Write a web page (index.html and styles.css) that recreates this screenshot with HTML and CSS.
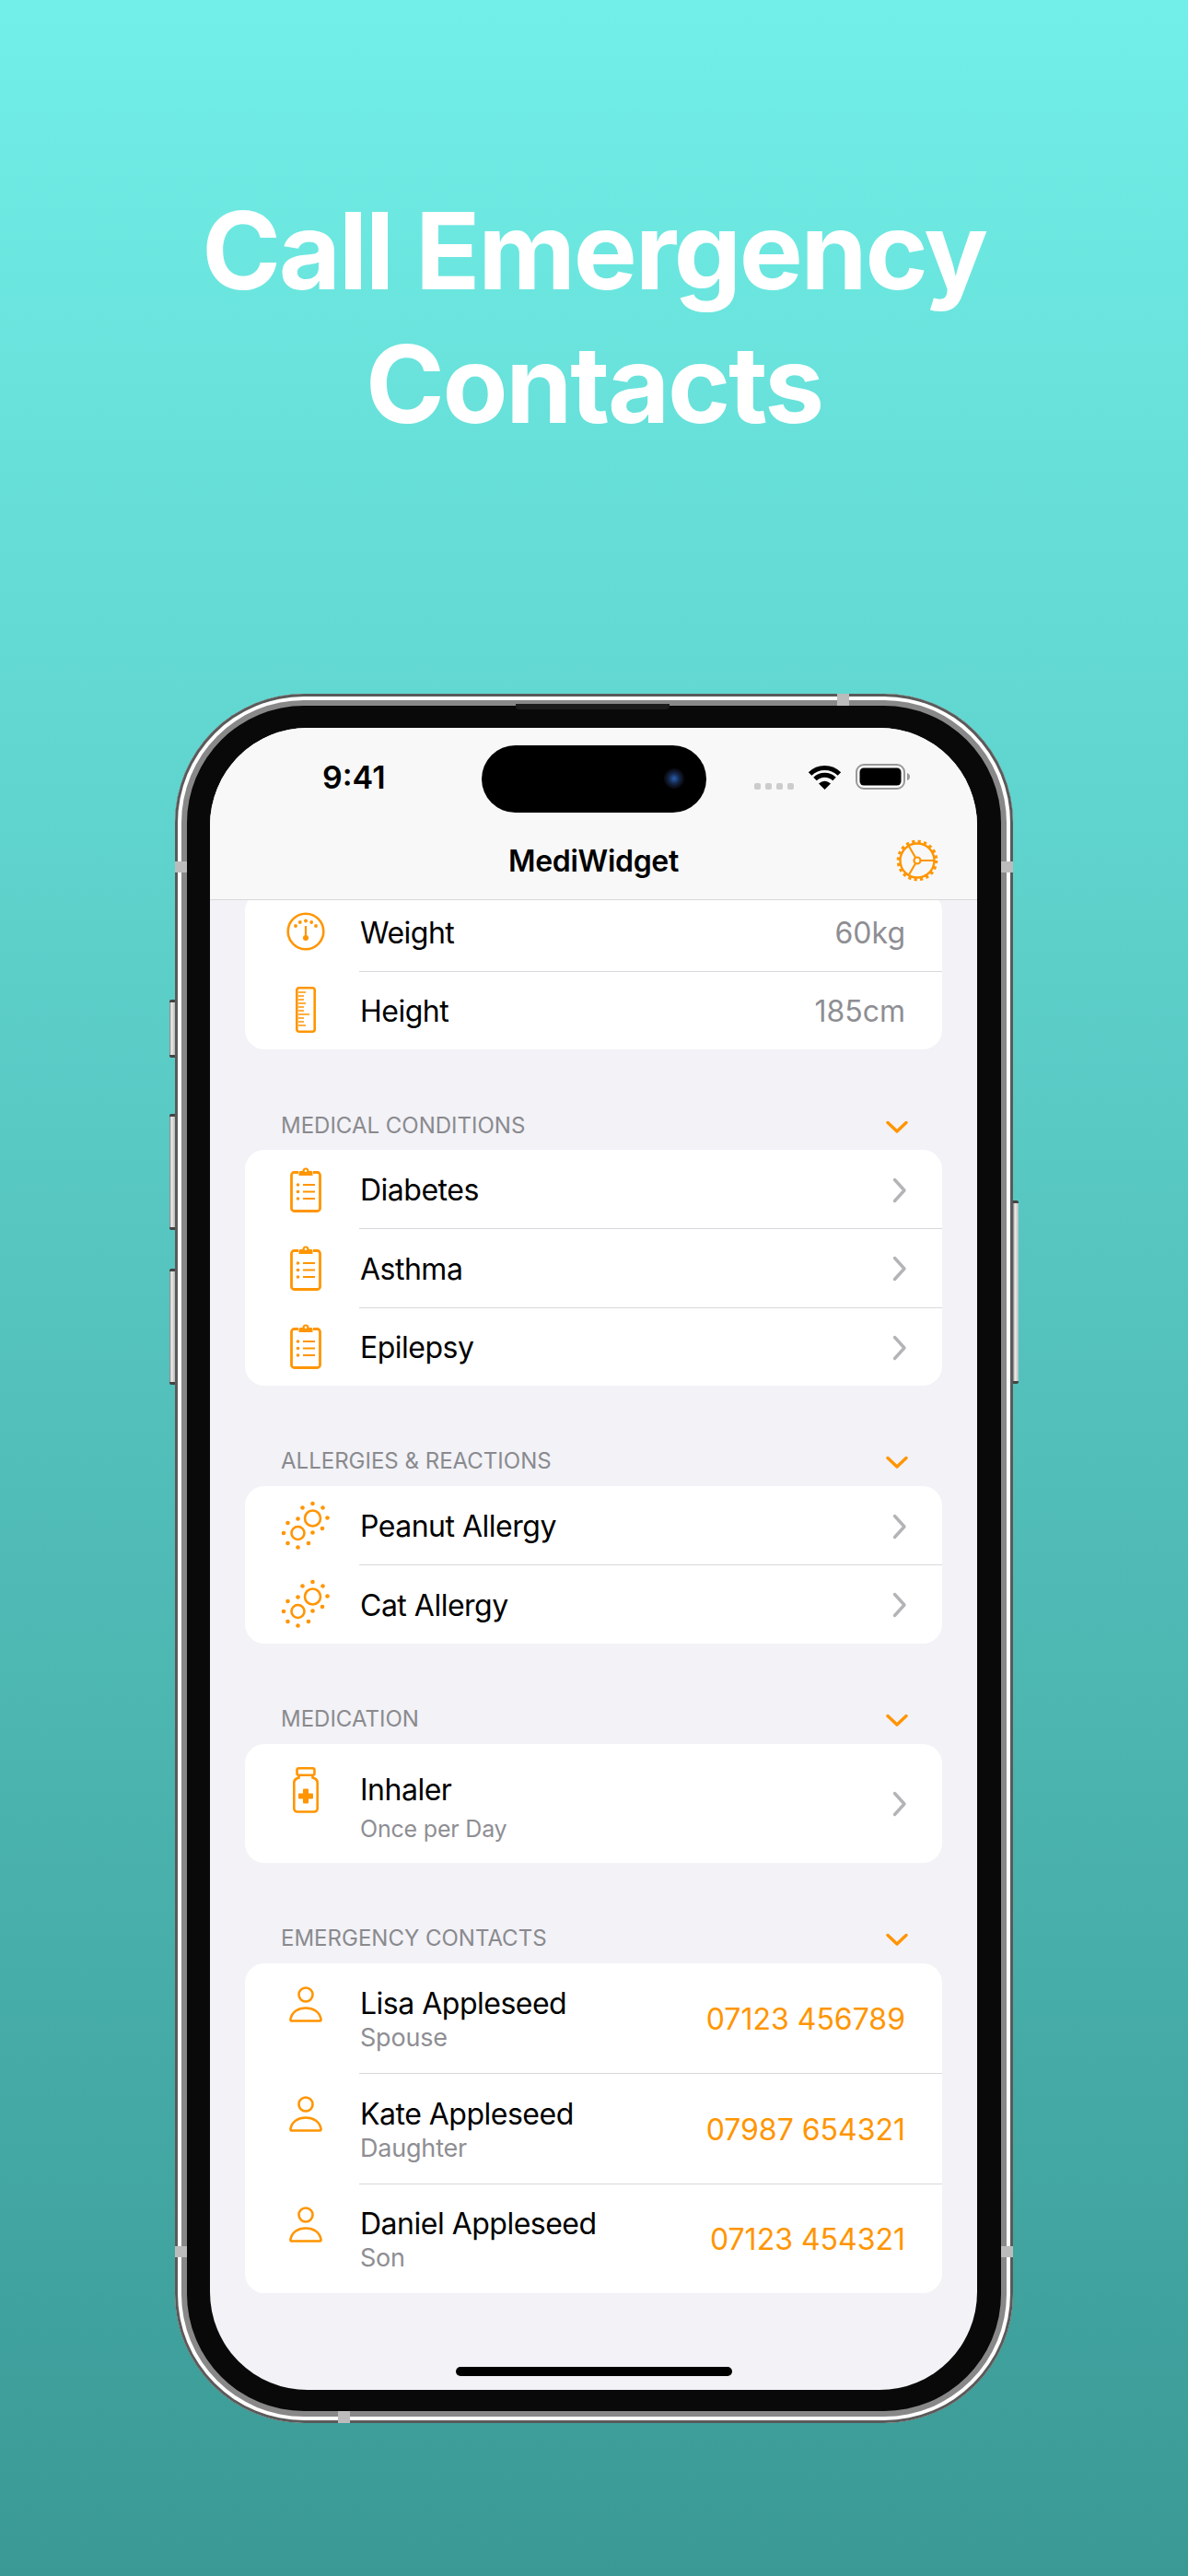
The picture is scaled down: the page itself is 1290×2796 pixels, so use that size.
FILE: index.html
```html
<!DOCTYPE html>
<html lang="en">
<head>
    <meta charset="UTF-8">
    <meta name="viewport" content="width=device-width, initial-scale=1.0">
    <title>MediWidget - Call Emergency Contacts</title>
    <link rel="stylesheet" href="styles.css">
</head>
<body>
    <svg class="sprites" width="0" height="0">
        <symbol id="i-gauge" viewBox="0 0 42 42">
            <circle cx="21" cy="21" r="19.3" fill="none" stroke="currentColor" stroke-width="2.6"/>
            <path d="M21 15v11" stroke="currentColor" stroke-width="2.2" fill="none"/>
            <circle cx="21" cy="28" r="3" fill="currentColor"/>
            <circle cx="21" cy="9.5" r="1.9" fill="currentColor"/>
            <circle cx="14.8" cy="11" r="1.9" fill="currentColor"/>
            <circle cx="27.2" cy="11" r="1.9" fill="currentColor"/>
            <circle cx="10" cy="15" r="1.9" fill="currentColor"/>
            <circle cx="32" cy="15" r="1.9" fill="currentColor"/>
        </symbol>
        <symbol id="i-ruler" viewBox="0 0 22 50">
            <rect x="1.3" y="1.3" width="19.4" height="47.4" rx="2.5" fill="none" stroke="currentColor" stroke-width="2.6"/>
            <path d="M3 6h8M3 10h6M3 14h6M3 18h8M3 22h6M3 26h6M3 30h12M3 34h6M3 38h6M3 42h8" stroke="currentColor" stroke-width="1.5" fill="none"/>
        </symbol>
        <symbol id="i-clipboard" viewBox="0 0 34 50">
            <path d="M9 6.500H4.500a3 3 0 0 0-3 3V45.500a3 3 0 0 0 3 3h25a3 3 0 0 0 3-3V9.500a3 3 0 0 0-3-3H25" fill="none" stroke="currentColor" stroke-width="2.800"/>
            <path d="M9.500 10V6.500a1.500 1.500 0 0 1 1.500-1.500h2.500a3.500 3.500 0 0 1 7 0H23a1.500 1.500 0 0 1 1.500 1.500V10z" fill="currentColor"/>
            <circle cx="17" cy="4.800" r="1.300" fill="#fff"/>
            <path d="M14 20h13M14 27.500h13M14 35h13" stroke="currentColor" stroke-width="2.200" fill="none"/>
            <circle cx="8.500" cy="20" r="1.800" fill="currentColor"/>
            <circle cx="8.500" cy="27.500" r="1.800" fill="currentColor"/>
            <circle cx="8.500" cy="35" r="1.800" fill="currentColor"/>
        </symbol>
        <symbol id="i-allergen" viewBox="0 0 54 54">
            <g fill="none" stroke="currentColor" stroke-width="2.600">
                <circle cx="34.500" cy="19" r="8.500"/>
                <circle cx="18.500" cy="35" r="7"/>
            </g>
            <g fill="currentColor">
                <circle cx="34.500" cy="3" r="2.300"/>
                <circle cx="23.500" cy="7.500" r="2.300"/>
                <circle cx="45.500" cy="7.500" r="2.300"/>
                <circle cx="50.500" cy="18.500" r="2.300"/>
                <circle cx="45" cy="30" r="2.300"/>
                <circle cx="34.500" cy="34.500" r="2.300"/>
                <circle cx="18.500" cy="19.500" r="2.300"/>
                <circle cx="7.500" cy="24" r="2.300"/>
                <circle cx="3" cy="35" r="2.300"/>
                <circle cx="7.500" cy="46" r="2.300"/>
                <circle cx="18.500" cy="50.500" r="2.300"/>
                <circle cx="30" cy="46" r="2.300"/>
            </g>
        </symbol>
        <symbol id="i-bottle" viewBox="0 0 28 50">
            <rect x="4.500" y="1.300" width="19" height="7.500" rx="2" fill="none" stroke="currentColor" stroke-width="2.600"/>
            <path d="M6.500 9v2.500L4 12.500Q1.300 14 1.300 17V45a3.500 3.500 0 0 0 3.500 3.500h18.400a3.500 3.500 0 0 0 3.500-3.500V17q0-3-2.700-4.500l-2.500-1V9" fill="none" stroke="currentColor" stroke-width="2.600"/>
            <path d="M11.500 24h5v5h5v5h-5v5h-5v-5h-5v-5h5z" fill="currentColor" stroke="currentColor" stroke-linejoin="round"/>
        </symbol>
        <symbol id="i-person" viewBox="0 0 36 40">
            <circle cx="18" cy="9" r="7.500" fill="none" stroke="currentColor" stroke-width="2.600"/>
            <path d="M2.500 37.500Q1.200 37.500 1.500 35.500C3 27.500 10 23.500 18 23.500s15 4 16.500 12q.3 2-1 2z" fill="none" stroke="currentColor" stroke-width="2.600" stroke-linejoin="round"/>
        </symbol>
    </svg>

    <header class="hero">
        <h1>Call Emergency<br>Contacts</h1>
    </header>

    <div class="phone">
        <span class="side-btn side-mute"></span>
        <span class="side-btn side-vol-up"></span>
        <span class="side-btn side-vol-down"></span>
        <span class="side-btn side-power"></span>
        <span class="band band-left-top"></span>
        <span class="band band-left-bottom"></span>
        <span class="band band-right-top"></span>
        <span class="band band-right-bottom"></span>
        <span class="band band-top"></span>
        <span class="band band-bottom"></span>
        <span class="speaker"></span>

        <div class="screen">
            <div class="island"><span class="camera"></span></div>

            <div class="status-bar">
                <span class="time">9:41</span>
                <div class="status-icons">
                    <span class="signal"><i></i><i></i><i></i><i></i></span>
                    <svg class="wifi" width="37" height="28" viewBox="0 0 37 28">
                        <path d="M2.600 11.100a22.500 22.500 0 0 1 31.800 0M8 16.500a15 15 0 0 1 21 0" fill="none" stroke="#000" stroke-width="5"/>
                        <path d="M18.500 28L12 21.500Q18.500 16 25 21.500z" fill="#000"/>
                    </svg>
                    <svg class="battery" width="60" height="28" viewBox="0 0 60 28">
                        <rect x="1" y="1" width="52" height="26" rx="8" fill="none" stroke="#999" stroke-width="2"/>
                        <rect x="4.500" y="4.500" width="45" height="19" rx="4.500" fill="#000"/>
                        <path d="M56 10q3 1 3 4t-3 4z" fill="#999"/>
                    </svg>
                </div>
            </div>

            <nav class="nav-bar">
                <span class="nav-title">MediWidget</span>
                <svg class="gear" width="46" height="46" viewBox="0 0 46 46">
                    <circle cx="23" cy="23" r="18.500" fill="none" stroke="#ff9500" stroke-width="2.400"/>
                    <circle cx="23" cy="23" r="20.500" fill="none" stroke="#ff9500" stroke-width="3.600" stroke-dasharray="3.200 3.240"/>
                    <circle cx="23" cy="23" r="3.500" fill="none" stroke="#ff9500" stroke-width="2.200"/>
                    <path d="M26.500 23H41M21.200 26 13.800 38.800M21.200 20 13.800 7.200" fill="none" stroke="#ff9500" stroke-width="2.200"/>
                </svg>
            </nav>

            <main class="list">
                <section class="card card-clipped">
                    <div class="row">
                        <svg class="row-icon icon-gauge"><use href="#i-gauge"/></svg>
                        <div class="row-main">
                            <span class="row-title">Weight</span>
                            <span class="row-value">60kg</span>
                        </div>
                    </div>
                    <div class="row">
                        <svg class="row-icon icon-ruler"><use href="#i-ruler"/></svg>
                        <div class="row-main">
                            <span class="row-title">Height</span>
                            <span class="row-value">185cm</span>
                        </div>
                    </div>
                </section>

                <section class="group">
                    <div class="group-head">
                        <span class="group-label">MEDICAL CONDITIONS</span>
                        <svg class="collapse" width="24" height="15" viewBox="0 0 24 15"><path d="M2 2.500l10 9.500 10-9.500" fill="none" stroke="#ff9500" stroke-width="3.400" stroke-linecap="round" stroke-linejoin="round"/></svg>
                    </div>
                    <div class="card">
                        <div class="row">
                            <svg class="row-icon icon-clipboard"><use href="#i-clipboard"/></svg>
                            <div class="row-main">
                                <span class="row-title">Diabetes</span>
                                <svg class="disclosure" width="16" height="28" viewBox="0 0 16 28"><path d="M2.500 2.500 13 14 2.500 25.500" fill="none" stroke="#b4b4b8" stroke-width="3.400" stroke-linecap="round" stroke-linejoin="round"/></svg>
                            </div>
                        </div>
                        <div class="row">
                            <svg class="row-icon icon-clipboard"><use href="#i-clipboard"/></svg>
                            <div class="row-main">
                                <span class="row-title">Asthma</span>
                                <svg class="disclosure" width="16" height="28" viewBox="0 0 16 28"><path d="M2.500 2.500 13 14 2.500 25.500" fill="none" stroke="#b4b4b8" stroke-width="3.400" stroke-linecap="round" stroke-linejoin="round"/></svg>
                            </div>
                        </div>
                        <div class="row">
                            <svg class="row-icon icon-clipboard"><use href="#i-clipboard"/></svg>
                            <div class="row-main">
                                <span class="row-title">Epilepsy</span>
                                <svg class="disclosure" width="16" height="28" viewBox="0 0 16 28"><path d="M2.500 2.500 13 14 2.500 25.500" fill="none" stroke="#b4b4b8" stroke-width="3.400" stroke-linecap="round" stroke-linejoin="round"/></svg>
                            </div>
                        </div>
                    </div>
                </section>

                <section class="group">
                    <div class="group-head">
                        <span class="group-label">ALLERGIES &amp; REACTIONS</span>
                        <svg class="collapse" width="24" height="15" viewBox="0 0 24 15"><path d="M2 2.500l10 9.500 10-9.500" fill="none" stroke="#ff9500" stroke-width="3.400" stroke-linecap="round" stroke-linejoin="round"/></svg>
                    </div>
                    <div class="card">
                        <div class="row">
                            <svg class="row-icon icon-allergen"><use href="#i-allergen"/></svg>
                            <div class="row-main">
                                <span class="row-title">Peanut Allergy</span>
                                <svg class="disclosure" width="16" height="28" viewBox="0 0 16 28"><path d="M2.500 2.500 13 14 2.500 25.500" fill="none" stroke="#b4b4b8" stroke-width="3.400" stroke-linecap="round" stroke-linejoin="round"/></svg>
                            </div>
                        </div>
                        <div class="row">
                            <svg class="row-icon icon-allergen"><use href="#i-allergen"/></svg>
                            <div class="row-main">
                                <span class="row-title">Cat Allergy</span>
                                <svg class="disclosure" width="16" height="28" viewBox="0 0 16 28"><path d="M2.500 2.500 13 14 2.500 25.500" fill="none" stroke="#b4b4b8" stroke-width="3.400" stroke-linecap="round" stroke-linejoin="round"/></svg>
                            </div>
                        </div>
                    </div>
                </section>

                <section class="group">
                    <div class="group-head">
                        <span class="group-label">MEDICATION</span>
                        <svg class="collapse" width="24" height="15" viewBox="0 0 24 15"><path d="M2 2.500l10 9.500 10-9.500" fill="none" stroke="#ff9500" stroke-width="3.400" stroke-linecap="round" stroke-linejoin="round"/></svg>
                    </div>
                    <div class="card">
                        <div class="row row-med">
                            <svg class="row-icon icon-bottle"><use href="#i-bottle"/></svg>
                            <div class="row-main">
                                <div class="row-text">
                                    <span class="row-title">Inhaler</span>
                                    <span class="row-sub row-sub-small">Once per Day</span>
                                </div>
                                <svg class="disclosure" width="16" height="28" viewBox="0 0 16 28"><path d="M2.500 2.500 13 14 2.500 25.500" fill="none" stroke="#b4b4b8" stroke-width="3.400" stroke-linecap="round" stroke-linejoin="round"/></svg>
                            </div>
                        </div>
                    </div>
                </section>

                <section class="group">
                    <div class="group-head">
                        <span class="group-label">EMERGENCY CONTACTS</span>
                        <svg class="collapse" width="24" height="15" viewBox="0 0 24 15"><path d="M2 2.500l10 9.500 10-9.500" fill="none" stroke="#ff9500" stroke-width="3.400" stroke-linecap="round" stroke-linejoin="round"/></svg>
                    </div>
                    <div class="card">
                        <div class="row row-contact">
                            <svg class="row-icon icon-person"><use href="#i-person"/></svg>
                            <div class="row-main">
                                <div class="row-text">
                                    <span class="row-title">Lisa Appleseed</span>
                                    <span class="row-sub">Spouse</span>
                                </div>
                                <span class="row-phone">07123 456789</span>
                            </div>
                        </div>
                        <div class="row row-contact">
                            <svg class="row-icon icon-person"><use href="#i-person"/></svg>
                            <div class="row-main">
                                <div class="row-text">
                                    <span class="row-title">Kate Appleseed</span>
                                    <span class="row-sub">Daughter</span>
                                </div>
                                <span class="row-phone">07987 654321</span>
                            </div>
                        </div>
                        <div class="row row-contact">
                            <svg class="row-icon icon-person"><use href="#i-person"/></svg>
                            <div class="row-main">
                                <div class="row-text">
                                    <span class="row-title">Daniel Appleseed</span>
                                    <span class="row-sub">Son</span>
                                </div>
                                <span class="row-phone">07123 454321</span>
                            </div>
                        </div>
                    </div>
                </section>
            </main>

            <span class="home-indicator"></span>
        </div>
    </div>
</body>
</html>
```

FILE: styles.css
```css
/* App store style screenshot: teal backdrop, headline, phone mockup */
body {
    font-family: 'Inter', 'Liberation Sans', sans-serif;
    margin: 0;
    width: 1290px;
    height: 2796px;
    overflow: hidden;
    color: #000;
    background: linear-gradient(180deg, #71efe8 0%, #3a9995 100%);
}

.sprites {
    display: block;
    height: 0;
}

.hero {
    height: 753px;
    padding-top: 200px;
    box-sizing: border-box;
    text-align: center;
}

h1 {
    margin: 0;
    font-size: 116px;
    line-height: 145px;
    font-weight: 700;
    letter-spacing: -2.3px;
    color: #fff;
}

/* phone body */
.phone {
    position: relative;
    width: 910px;
    height: 1877px;
    margin: 0 auto;
    padding: 37px 39px 36px 38px;
    box-sizing: border-box;
    background: #090909;
    border-radius: 140px;
    box-shadow: inset 0 0 0 3px #5a5a5a, inset 0 0 0 7px #fff, inset 0 0 0 13px #888;
}

.side-btn {
    position: absolute;
    width: 6px;
    background: linear-gradient(90deg, #777, #eee 35%, #bbb);
    border-top: 3px solid #444;
    border-bottom: 3px solid #444;
    box-sizing: border-box;
    border-radius: 2px 0 0 2px;
}

.side-mute { left: -6px; top: 332px; height: 63px; }
.side-vol-up { left: -6px; top: 456px; height: 126px; }
.side-vol-down { left: -6px; top: 624px; height: 126px; }
.side-power { right: -6px; top: 550px; height: 199px; border-radius: 0 2px 2px 0; }

.band {
    position: absolute;
    background: #bcbcbc;
}

.band-left-top { left: 0; top: 182px; width: 13px; height: 12px; }
.band-left-bottom { left: 0; top: 1685px; width: 13px; height: 12px; }
.band-right-top { right: 0; top: 182px; width: 13px; height: 12px; }
.band-right-bottom { right: 0; top: 1685px; width: 13px; height: 12px; }
.band-top { left: 719px; top: 0; width: 13px; height: 13px; }
.band-bottom { left: 177px; bottom: 0; width: 13px; height: 13px; }

.speaker {
    position: absolute;
    left: 370px;
    top: 11px;
    width: 167px;
    height: 6px;
    background: #1c1c1c;
    border-radius: 0 0 4px 4px;
}

.screen {
    position: relative;
    height: 100%;
    display: flex;
    flex-direction: column;
    background: #f2f2f7;
    border-radius: 106px;
    overflow: hidden;
}

.island {
    position: absolute;
    left: 295px;
    top: 19px;
    width: 244px;
    height: 73px;
    background: #000;
    border-radius: 37px;
}

.camera {
    position: absolute;
    right: 24px;
    top: 25px;
    width: 22px;
    height: 22px;
    border-radius: 50%;
    background: radial-gradient(circle, #2a5fb0 0, #15294d 35%, #0a0a12 65%);
}

.status-bar {
    height: 106px;
    display: flex;
    justify-content: space-between;
    align-items: center;
    padding: 0 72px 0 122px;
    box-sizing: border-box;
    background: #f8f8f8;
}

.time {
    font-size: 34px;
    font-weight: 600;
}

.status-icons {
    display: flex;
    align-items: center;
    gap: 15px;
}

.signal {
    display: flex;
    gap: 5px;
    margin-top: 20px;
}

.signal i {
    width: 7px;
    height: 7px;
    background: #ccc;
    border-radius: 2px;
}

.wifi, .battery {
    display: block;
}

.nav-bar {
    height: 81px;
    padding: 0 42px 4px;
    display: grid;
    grid-template-columns: 1fr auto 1fr;
    align-items: center;
    box-sizing: border-box;
    background: #f8f8f8;
    border-bottom: 1px solid #d8d8d8;
}

.nav-title {
    grid-column: 2;
    font-size: 32px;
    font-weight: 600;
    letter-spacing: -0.3px;
}

.gear {
    grid-column: 3;
    justify-self: end;
}

/* settings list, scrolled a little under the nav bar */
.list {
    flex: 1;
    min-height: 0;
    overflow: hidden;
    padding: 0 38px;
}

.card {
    background: #fff;
    border-radius: 21px;
}

.card-clipped {
    margin-top: -8.67px;
}

.group {
    margin-top: 55px;
}

.group-head {
    height: 54px;
    padding: 0 37px 0 39px;
    display: flex;
    justify-content: space-between;
    align-items: center;
}

.group-label {
    font-size: 24px;
    color: #8a8a8e;
}

.collapse {
    margin-top: 4px;
}

.row {
    display: flex;
    height: 85.33px;
}

.row-med {
    height: 129px;
}

.row-contact {
    height: 119.5px;
}

.row-icon {
    width: 90px;
    height: 50px;
    margin: auto 13px auto 21px;
    flex-shrink: 0;
    color: #ff9500;
}

.icon-gauge {
    height: 42px;
}

.icon-allergen {
    height: 54px;
}

.icon-person {
    height: 40px;
}

.row-med .row-icon {
    margin-top: 25px;
}

.row-contact .row-icon {
    margin-top: 25px;
}

.row-main {
    flex: 1;
    display: flex;
    justify-content: space-between;
    align-items: center;
    padding: 2px 40px 0 1px;
    border-top: 1px solid #d8d8dc;
}

.row:first-child .row-main {
    border-top: none;
}

.row-title {
    display: block;
    font-size: 32px;
    letter-spacing: -0.5px;
}

.row-value {
    font-size: 32px;
    color: #8e8e93;
}

.row-phone {
    font-size: 32px;
    color: #ff9500;
}

.row-sub {
    display: block;
    font-size: 27px;
    margin-top: 1px;
    letter-spacing: -0.2px;
    color: #8e8e93;
}

.row-med .row-text {
    padding-top: 6px;
}

.row-sub-small {
    font-size: 25px;
    margin-top: 8px;
}

.disclosure {
    display: block;
    margin-right: -2px;
}

.home-indicator {
    position: absolute;
    left: 267px;
    bottom: 15px;
    width: 300px;
    height: 10px;
    background: #000;
    border-radius: 5px;
}
```
